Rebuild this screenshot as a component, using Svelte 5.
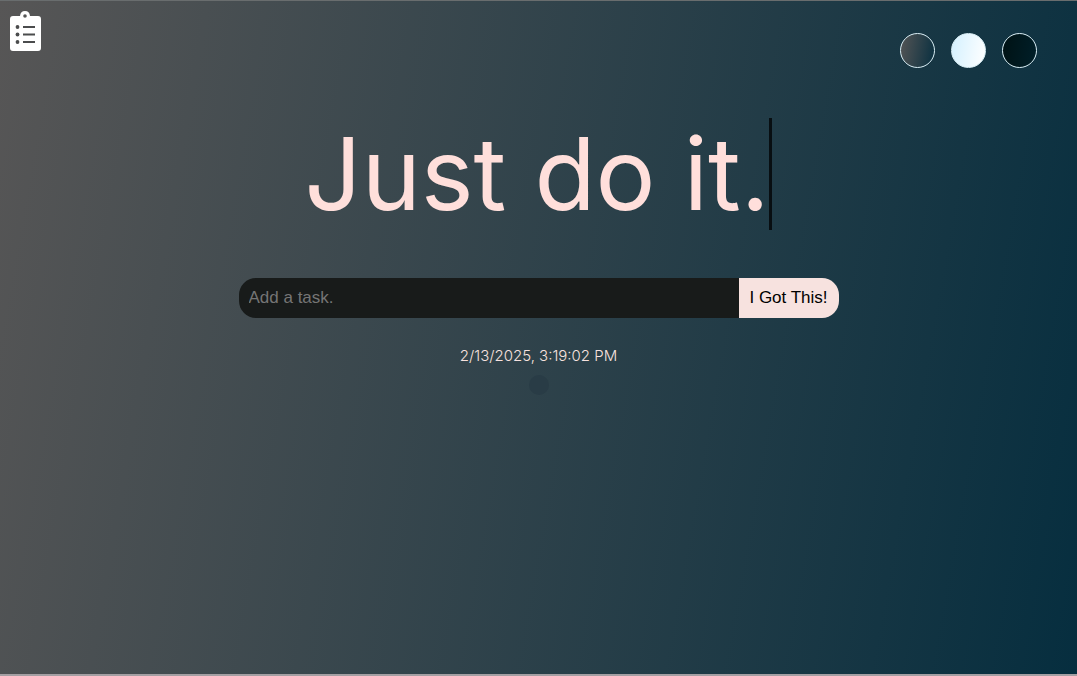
<script>
  let task = $state('');
  let theme = $state('standard');
  const themes = ['standard', 'light', 'darker'];
</script>

<div class="page {theme}">
  <header>
    <svg class="logo" viewBox="0 0 31 40" role="img" aria-label="To-do list">
      <path fill="#fff" fill-rule="evenodd" d="M3 5H10Q10.500 0 15 0Q19.500 0 20 5H28Q31 5 31 8V37Q31 40 28 40H3Q0 40 0 37V8Q0 5 3 5ZM15 3.200A1.800 1.800 0 1 0 15 6.800A1.800 1.800 0 1 0 15 3.200Z" />
      <g fill="#4b4c4d">
        <circle cx="7.500" cy="16" r="1.900" />
        <circle cx="7.500" cy="23.500" r="1.900" />
        <circle cx="7.500" cy="31" r="1.900" />
        <path d="M13 15h12v2H13zM13 22.500h12v2H13zM13 30h12v2H13z" />
      </g>
    </svg>
    <div class="themes">
      {#each themes as name}
        <button class="swatch {name}" type="button" aria-label={name} onclick={() => (theme = name)}></button>
      {/each}
    </div>
  </header>
  <main>
    <h1>Just do it.</h1>
    <form onsubmit={(e) => e.preventDefault()}>
      <input type="text" placeholder="Add a task." aria-label="Add a task." bind:value={task} />
      <button type="submit">I Got This!</button>
    </form>
    <p>2/13/2025, 3:19:02 PM</p>
    <div class="list"></div>
  </main>
</div>

<style>
  :global(body) { margin: 0; }
  * { box-sizing: border-box; }
  .page {
    min-height: 100vh;
    border-top: 1px solid #696d6e;
    border-bottom: 2px solid #a49fa3;
    font-family: Inter, sans-serif;
  }
  .standard { background: linear-gradient(100deg, #575656, #062e3f) border-box; }
  .light { background: linear-gradient(100deg, #d4f1ff, #ffffff); }
  .darker { background: linear-gradient(100deg, #001214, #001f29); }
  header {
    display: flex;
    justify-content: space-between;
    align-items: flex-start;
    padding: 10px 40px 0 10px;
  }
  .logo { width: 31px; height: 40px; }
  .themes { display: flex; gap: 16px; padding-top: 22px; }
  .swatch {
    width: 35px;
    height: 35px;
    padding: 0;
    border: 1px solid #d9eef5;
    border-radius: 50%;
    cursor: pointer;
  }
  main {
    display: flex;
    flex-direction: column;
    align-items: center;
    padding-top: 50px;
  }
  h1 {
    margin: 0;
    border-right: 3px solid rgba(0, 0, 0, 0.75);
    color: #ffdfdb;
    font-size: 100px;
    font-weight: 400;
    line-height: 112px;
    white-space: nowrap;
  }
  form {
    display: flex;
    width: 600px;
    max-width: 100%;
    height: 40px;
    margin-top: 48px;
  }
  input, form button {
    border: 0;
    padding: 0 10px;
    font: 17px "Liberation Sans", Arial, sans-serif;
  }
  input {
    flex: 1;
    min-width: 0;
    border-radius: 17px 0 0 17px;
    background: #181b1a;
    color: #ffdfdb;
    outline: none;
  }
  input::placeholder { color: #757575; }
  form button {
    width: 100px;
    border-radius: 0 17px 17px 0;
    background: #f7e2df;
    color: #000;
    white-space: nowrap;
    cursor: pointer;
  }
  p {
    margin: 28px 0 0;
    color: #f7e2df;
    font-size: 15px;
    font-weight: 300;
    line-height: 20px;
  }
  .list {
    width: 20px;
    height: 20px;
    margin-top: 9px;
    border-radius: 50%;
    background: #293c46;
  }
</style>
